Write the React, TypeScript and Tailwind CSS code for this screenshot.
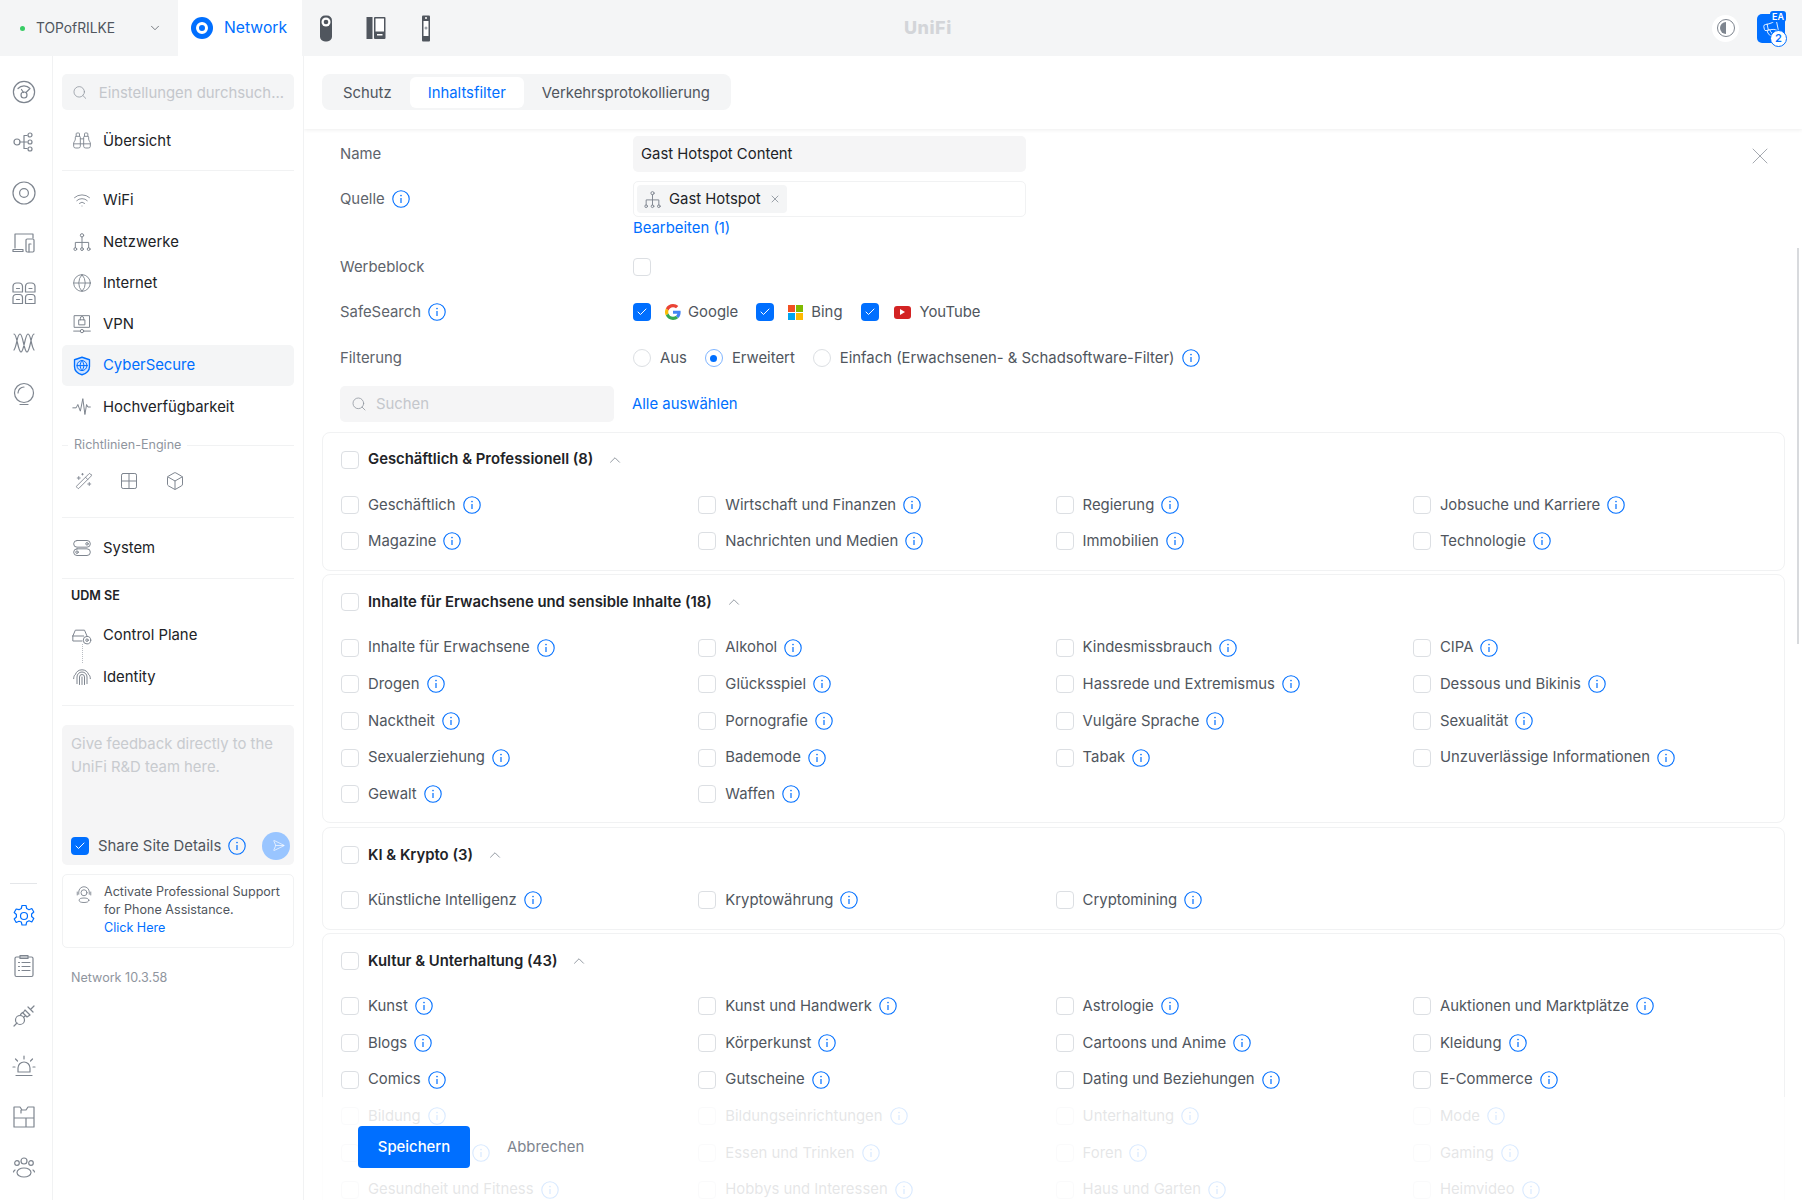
import React from 'react';
import { ChevronDown, ChevronUp, Search, X, Check, Binoculars, Wifi, Globe, Send, Wand2, Box, Megaphone } from 'lucide-react';

const blue = 'text-[#006fff]';

const Info: React.FC = () => (
  <svg width="18" height="18" viewBox="0 0 18 18" fill="none" className={`block shrink-0 ${blue}`} stroke="currentColor">
    <circle cx="9" cy="9" r="8.2" strokeWidth="1.1" />
    <path d="M9 8v5" strokeWidth="1.2" />
    <circle cx="9" cy="5.6" r=".8" fill="currentColor" stroke="none" />
  </svg>
);

const CheckBox: React.FC<{ on?: boolean }> = ({ on }) =>
  on ? (
    <span className="flex h-[18px] w-[18px] shrink-0 items-center justify-center rounded-[4px] bg-[#006fff] text-white">
      <Check size={12} strokeWidth={2} />
    </span>
  ) : (
    <span className="block h-[18px] w-[18px] shrink-0 rounded-[4px] border border-[#dcdfe3] bg-white" />
  );

const Radio: React.FC<{ on?: boolean }> = ({ on }) =>
  on ? (
    <span className="flex h-[18px] w-[18px] shrink-0 items-center justify-center rounded-full border border-[#7fb5ff]">
      <span className="h-[7px] w-[7px] rounded-full bg-[#006fff]" />
    </span>
  ) : (
    <span className="block h-[18px] w-[18px] shrink-0 rounded-full border border-[#dcdfe3]" />
  );

const Svg: React.FC<{ size?: number; children: React.ReactNode; className?: string }> = ({ size = 24, children, className = 'text-[#7e858f]' }) => (
  <svg width={size} height={size} viewBox="0 0 24 24" fill="none" stroke="currentColor" strokeWidth="1.2" strokeLinecap="round" strokeLinejoin="round" className={`shrink-0 ${className}`}>
    {children}
  </svg>
);

const OrgIcon: React.FC<{ size?: number }> = ({ size = 20 }) => (
  <Svg size={size}>
    <circle cx="12" cy="4" r="2" />
    <path d="M12 6v13M4 19v-6.500h16V19" />
    <circle cx="4" cy="20.500" r="1.700" />
    <circle cx="12" cy="20.500" r="1.700" />
    <circle cx="20" cy="20.500" r="1.700" />
  </Svg>
);

const railTop: React.ReactNode[] = [
  <Svg key="a"><circle cx="12" cy="12" r="10.6" /><path d="M6 8.500a8 8 0 0 1 12 0l-4 4" /><circle cx="12" cy="15" r="3" /><path d="M9.500 9.500l2 3" /></Svg>,
  <Svg key="b"><circle cx="5" cy="12" r="3" /><path d="M8 12h4M12 5.500v13M12 5.500h3M12 12h3M12 18.500h3" /><circle cx="18" cy="5" r="2" /><circle cx="18" cy="12" r="2" /><circle cx="18" cy="19" r="2" /></Svg>,
  <Svg key="c"><circle cx="12" cy="12" r="11" /><circle cx="12" cy="12" r="4.400" /></Svg>,
  <Svg key="d"><path d="M3 17V3h18v4" /><path d="M1 20.500h10v-2H1z" /><rect x="14" y="8" width="8" height="13" rx="1.200" /><path d="M17 21v-8h2" /></Svg>,
  <Svg key="e"><path d="M1 11V5a3.500 3.500 0 0 1 3.500-3h2.500a3.500 3.500 0 0 1 3.500 3v6zM13.500 11V5A3.500 3.500 0 0 1 17 2h2.500A3.500 3.500 0 0 1 23 5v6zM1 22.500v-6a3 3 0 0 1 3-3h3.500a3 3 0 0 1 3 3v6zM13.500 22.500v-6a3 3 0 0 1 3-3H20a3 3 0 0 1 3 3v6zM4.500 7.500h3M17 7.500h3M4.500 18.500h3M17 18.500h3" /></Svg>,
  <Svg key="f"><path d="M2 3c3 0 4 18 7 18S13 3 16 3s3 12 6 16M22 3c-3 0-4 18-7 18S11 3 8 3 5 15 2 19" /></Svg>,
  <Svg key="g"><circle cx="12" cy="11" r="9.500" /><path d="M6 11a6 6 0 0 1 6-6M8 22.500h8" /></Svg>,
];

const railBottom: React.ReactNode[] = [
  <Svg key="a" className="text-[#006fff]"><circle cx="12" cy="12" r="3.500" /><path d="M10 1.500h4l.7 3 2.300 1.200 2.800-1.200 2 3.500-2.200 2v2.500l2.200 2-2 3.500-2.800-1.200-2.300 1.200-.7 3h-4l-.7-3L7 17.300l-2.800 1.200-2-3.500 2.200-2v-2.500l-2.200-2 2-3.500L7 5.700l2.300-1.200z" /></Svg>,
  <Svg key="b"><rect x="3" y="3" width="18" height="19.500" rx="1.500" /><path d="M8 1.500h8V4.500H8zM6.500 8.500h1M10 8.500h8M6.500 12.500h1M10 12.500h8M6.500 16.500h1M10 16.500h8" /></Svg>,
  <Svg key="c"><path d="M2 22l3-3M22 2l-3 3M16 3l5 5M13 6l5 5-3 2-4-4zM10.500 8.500l-2 2M13.500 11.500l-2 2" /><circle cx="8" cy="16" r="4.500" /></Svg>,
  <Svg key="d"><path d="M6 18v-4a6 6 0 0 1 12 0v4zM4 21.500h16M12 2v3M3.500 5l2 2M20.500 5l-2 2M1 13h2M21 13h2" /></Svg>,
  <Svg key="e"><path d="M2 2h6l2 3h4l2-3h6v20H2zM2 13h12M14 13h8M14 13v9M9 5v3" /></Svg>,
  <Svg key="f"><circle cx="12" cy="6" r="3" /><ellipse cx="12" cy="17.500" rx="7" ry="4.500" /><circle cx="5" cy="8" r="2.300" /><circle cx="19" cy="8" r="2.300" /><path d="M3 15a3 3 0 0 0-1.500 2M21 15a3 3 0 0 1 1.500 2" /></Svg>,
];

const NavItem: React.FC<{ icon: React.ReactNode; label: string; active?: boolean }> = ({ icon, label, active }) => (
  <div className={`flex h-[41.3px] items-center gap-[11px] rounded-[5px] px-[10px] text-[14.86px] ${active ? 'bg-[#f4f5f6] text-[#006fff]' : 'text-[#212327]'}`}>
    <span className="flex w-[20px] justify-center">{icon}</span>
    {label}
  </div>
);

const Divider: React.FC<{ className?: string }> = ({ className = '' }) => <div className={`h-px bg-[#f1f2f3] ${className}`} />;

const Sidebar: React.FC = () => (
  <aside className="flex h-full w-[251px] shrink-0 flex-col border-r border-[#f1f2f3] px-[9px] pt-[18px]">
    <div className="flex h-9 shrink-0 items-center gap-[11px] rounded-[5px] bg-[#f4f5f6] px-[10px] text-[14.86px] text-[#c4c7cc]">
      <Search size={17} strokeWidth={1.2} className="text-[#8f959e]" />
      <span className="whitespace-nowrap pt-[2px]">Einstellungen durchsuch...</span>
    </div>
    <div className="mt-[10px]">
      <NavItem label="Übersicht" icon={<Binoculars size={21} strokeWidth={1.1} className="text-[#7e858f]" />} />
    </div>
    <Divider className="mt-[8.5px] mb-[9px]" />
    <NavItem label="WiFi" icon={<Wifi size={18} strokeWidth={1.2} className="text-[#7e858f]" />} />
    <NavItem label="Netzwerke" icon={<OrgIcon />} />
    <NavItem label="Internet" icon={<Globe size={20} strokeWidth={1.1} className="text-[#7e858f]" />} />
    <NavItem label="VPN" icon={<Svg size={20}><rect x="3" y="2" width="18" height="14" /><rect x="8.500" y="7" width="7" height="6" /><path d="M10 7V5a2 2 0 0 1 4 0v2M2 20.500h8M14 20.500h8" /><circle cx="12" cy="20.500" r="2" /></Svg>} />
    <NavItem active label="CyberSecure" icon={<Svg size={20} className="text-[#006fff]"><path d="M12 1.500l9 3v8c0 5-4 8.500-9 10-5-1.500-9-5-9-10v-8z" fill="#cfe3ff" strokeWidth="1.600" /><circle cx="12" cy="11.500" r="6" /><path d="M6 11.500h12M12 5.500c-3 3.500-3 8.500 0 12M12 5.500c3 3.500 3 8.500 0 12" /></Svg>} />
    <NavItem label="Hochverfügbarkeit" icon={<Svg size={20}><path d="M1 13h4l2-4 3 8 3-15 2.500 19 2-12 1.500 3h3" /></Svg>} />
    <div className="mt-[8px] flex h-5 items-center gap-[6px]">
      <span className="h-px w-[6px] bg-[#f1f2f3]" />
      <span className="text-[12.57px] text-[#8f959e]">Richtlinien-Engine</span>
      <span className="h-px flex-1 bg-[#f1f2f3]" />
    </div>
    <div className="mt-[17px] flex h-[16px] items-center gap-[26px] pl-[13px]">
      <Wand2 size={18} strokeWidth={1.2} className="text-[#7e858f]" />
      <Svg size={20}><rect x="3" y="3" width="18" height="18" rx="2" /><path d="M12 3v18M3 12h18" /></Svg>
      <Box size={20} strokeWidth={1.2} className="text-[#7e858f]" />
    </div>
    <Divider className="mt-[28px] mb-[10px]" />
    <NavItem label="System" icon={<Svg size={20}><rect x="2" y="3" width="20" height="8" rx="4" /><rect x="2" y="13" width="20" height="8" rx="4" /><circle cx="18" cy="7" r="1.500" /><circle cx="6" cy="17" r="1.500" /></Svg>} />
    <Divider className="mt-[9px]" />
    <div className="mt-[9px] flex h-[18px] items-center pl-[9px] text-[12.57px] font-semibold text-[#212327]">UDM SE</div>
    <div className="relative mt-[9px]">
      <NavItem label="Control Plane" icon={<Svg size={20}><path d="M1 12l3-7h11l3 7M1 12v6h11M1 12h13" /><circle cx="18" cy="17" r="4.500" /><circle cx="18" cy="17" r="1.500" /></Svg>} />
      <span className="absolute left-[19.5px] top-[29px] h-[19px] border-l border-dotted border-[#b9bdc3]" />
      <NavItem label="Identity" icon={<Svg size={20}><path d="M4 9a8.500 8.500 0 0 1 16 0M2 14c0-2 .5-3 1-4M22 14c0-2-.5-3-1-4M6 20v-8a6 6 0 0 1 12 0v8M9 21v-9a3 3 0 0 1 6 0v9M12 12v9" /></Svg>} />
    </div>
    <Divider className="mt-[8px]" />
    <div className="mt-[18.500px] flex h-[140px] shrink-0 flex-col rounded-[5px] bg-[#f5f5f6] pb-[5px] pl-[9px] pr-[4px] pt-[8px]">
      <p className="text-[14.86px] leading-[23px] text-[#c8cbcf]">Give feedback directly to the<br />UniFi R&amp;D team here.</p>
      <div className="mt-auto flex items-center">
        <CheckBox on />
        <span className="ml-[9px] text-[14.86px] text-[#50565e]">Share Site Details</span>
        <span className="ml-[7px]"><Info /></span>
        <span className="ml-auto flex h-7 w-7 items-center justify-center rounded-full bg-[#99c5ff] text-white"><Send size={13} strokeWidth={1.2} className="rotate-45" /></span>
      </div>
    </div>
    <div className="mt-[9px] flex h-[74px] shrink-0 gap-[11px] rounded-[5px] border border-[#f1f2f3] py-[8px] pl-[12px] text-[12.57px] leading-[18px] text-[#50565e]">
      <Svg size={18} className="mt-[3px] text-[#7e858f]"><circle cx="12" cy="9" r="4" /><path d="M5 11V8a7 7 0 0 1 14 0v3M3 8v4M21 8v4" /><ellipse cx="12" cy="19" rx="6.500" ry="3" /></Svg>
      <div>
        Activate Professional Support
        <br />
        for Phone Assistance.
        <br />
        <span className={blue}>Click Here</span>
      </div>
    </div>
    <div className="mt-[21px] pl-[9px] text-[12.57px] text-[#8f959e]">Network 10.3.58</div>
  </aside>
);

type Cat = { title: string; rows: string[][] };

const cats: Cat[] = [
  {
    title: 'Geschäftlich & Professionell (8)',
    rows: [
      ['Geschäftlich', 'Wirtschaft und Finanzen', 'Regierung', 'Jobsuche und Karriere'],
      ['Magazine', 'Nachrichten und Medien', 'Immobilien', 'Technologie'],
    ],
  },
  {
    title: 'Inhalte für Erwachsene und sensible Inhalte (18)',
    rows: [
      ['Inhalte für Erwachsene', 'Alkohol', 'Kindesmissbrauch', 'CIPA'],
      ['Drogen', 'Glücksspiel', 'Hassrede und Extremismus', 'Dessous und Bikinis'],
      ['Nacktheit', 'Pornografie', 'Vulgäre Sprache', 'Sexualität'],
      ['Sexualerziehung', 'Bademode', 'Tabak', 'Unzuverlässige Informationen'],
      ['Gewalt', 'Waffen'],
    ],
  },
  {
    title: 'KI & Krypto (3)',
    rows: [['Künstliche Intelligenz', 'Kryptowährung', 'Cryptomining']],
  },
  {
    title: 'Kultur & Unterhaltung (43)',
    rows: [
      ['Kunst', 'Kunst und Handwerk', 'Astrologie', 'Auktionen und Marktplätze'],
      ['Blogs', 'Körperkunst', 'Cartoons und Anime', 'Kleidung'],
      ['Comics', 'Gutscheine', 'Dating und Beziehungen', 'E-Commerce'],
      ['Bildung', 'Bildungseinrichtungen', 'Unterhaltung', 'Mode'],
      ['Gemeinschaft', 'Essen und Trinken', 'Foren', 'Gaming'],
      ['Gesundheit und Fitness', 'Hobbys und Interessen', 'Haus und Garten', 'Heimvideo'],
    ],
  },
];

const CategoryCard: React.FC<{ cat: Cat }> = ({ cat }) => (
  <section className="shrink-0 rounded-[8px] border border-[#f1f2f3] pb-[10px] pl-[18px] pt-[9px]">
    <div className="flex h-9 items-center">
      <CheckBox />
      <span className="ml-[9px] text-[14.86px] font-semibold text-[#212327]">{cat.title}</span>
      <ChevronUp size={18} strokeWidth={1.1} className="ml-[13px] text-[#7e858f]" />
    </div>
    <div className="mt-[9px] grid grid-cols-[repeat(4,357.3px)]">
      {cat.rows.flat().map((item) => (
        <div key={item} className="flex h-[36.67px] items-center">
          <CheckBox />
          <span className="ml-[9px] text-[14.86px] text-[#50565e]">{item}</span>
          <span className="ml-[7px]"><Info /></span>
        </div>
      ))}
    </div>
  </section>
);

const GoogleG = () => (
  <svg width="16" height="16" viewBox="0 0 48 48">
    <path fill="#EA4335" d="M24 9.500c3.500 0 6.600 1.200 9.100 3.600l6.800-6.800C35.800 2.500 30.300 0 24 0 14.600 0 6.500 5.400 2.600 13.200l7.900 6.200C12.400 13.600 17.700 9.500 24 9.500z" />
    <path fill="#4285F4" d="M46.900 24.500c0-1.600-.1-3.100-.4-4.500H24v9h12.900c-.6 3-2.200 5.500-4.700 7.200l7.700 6c4.500-4.200 7-10.300 7-17.700z" />
    <path fill="#FBBC05" d="M10.500 28.600A14.500 14.500 0 0 1 10.500 19.400l-7.900-6.200a24 24 0 0 0 0 21.600z" />
    <path fill="#34A853" d="M24 48c6.500 0 11.900-2.100 15.900-5.800l-7.700-6c-2.200 1.500-4.900 2.300-8.200 2.300-6.300 0-11.600-4.100-13.500-9.900l-7.900 6.200C6.500 42.600 14.600 48 24 48z" />
  </svg>
);

const BingMark = () => (
  <span className="grid h-[15px] w-[15px] grid-cols-2 gap-px">
    <span className="bg-[#f25022]" />
    <span className="bg-[#7fba00]" />
    <span className="bg-[#00a4ef]" />
    <span className="bg-[#ffb900]" />
  </span>
);

const YouTubeMark = () => (
  <span className="flex h-[13px] w-[17px] items-center justify-center rounded-[3px] bg-[#d32323]">
    <span className="h-0 w-0 border-y-[3px] border-l-[5px] border-y-transparent border-l-white" />
  </span>
);

const Field: React.FC<{ label: string; info?: boolean; className?: string; children: React.ReactNode }> = ({ label, info, className = '', children }) => (
  <div className={`flex h-9 items-center text-[14.86px] ${className}`}>
    <div className="flex w-[293px] shrink-0 items-center gap-[7px] text-[#5e646c]">
      {label}
      {info && <Info />}
    </div>
    {children}
  </div>
);

const Brand: React.FC<{ logo: React.ReactNode; label: string; className?: string; logoClass?: string }> = ({ logo, label, className = '', logoClass = 'ml-[13px] mr-[7px]' }) => (
  <div className={`flex items-center text-[#50565e] ${className}`}>
    <CheckBox on />
    <span className={`flex w-[17px] justify-center ${logoClass}`}>{logo}</span>
    {label}
  </div>
);

const Main: React.FC = () => (
  <main className="relative flex h-full min-w-0 flex-1 flex-col overflow-hidden">
    <div className="relative z-10 flex h-[73px] shrink-0 items-start bg-white px-[18px] pt-[18px] shadow-[0_1px_4px_rgba(0,0,0,0.07)]">
      <div className="flex h-9 items-center rounded-[8px] bg-[#f4f5f6] p-[3px] text-[14.86px] text-[#50565e]">
        <span className="px-[18px] pt-[2px]">Schutz</span>
        <span className={`flex h-[31px] items-center rounded-[6px] bg-white px-[18px] pt-[2px] ${blue}`}>Inhaltsfilter</span>
        <span className="px-[18px] pt-[2px]">Verkehrsprotokollierung</span>
      </div>
    </div>

    <div className="relative px-[18px] pt-[7px]">
      <X size={28} strokeWidth={0.8} className="absolute right-[28px] top-[13px] text-[#9ea3aa]" />
      <div className="pl-[18px]">
        <Field label="Name">
          <div className="flex h-9 w-[393px] items-center rounded-[5px] bg-[#f5f5f6] px-[8px] text-[#212327]">Gast Hotspot Content</div>
        </Field>
        <Field label="Quelle" info className="mt-[9px]">
          <div className="flex h-9 w-[393px] items-center rounded-[5px] border border-[#f1f2f3] px-[3px]">
            <div className="flex h-7 items-center rounded-[4px] bg-[#f4f5f6] px-[6px] text-[#212327]">
              <OrgIcon size={19} />
              <span className="ml-[7px]">Gast Hotspot</span>
              <X size={12} strokeWidth={1.5} className="ml-[8px] text-[#7e858f]" />
            </div>
          </div>
        </Field>
        <div className={`ml-[293px] flex h-[21px] items-center pt-[2px] text-[14.86px] ${blue}`}>Bearbeiten (1)</div>
        <Field label="Werbeblock" className="mt-[11px]">
          <CheckBox />
        </Field>
        <Field label="SafeSearch" info className="mt-[9px]">
          <Brand logo={<GoogleG />} label="Google" />
          <Brand logo={<BingMark />} label="Bing" className="ml-[18px]" />
          <Brand logo={<YouTubeMark />} label="YouTube" className="ml-[18px]" logoClass="ml-[15px] mr-[9px]" />
        </Field>
        <Field label="Filterung" className="mt-[10px]">
          <div className="flex items-center text-[#50565e]">
            <Radio />
            <span className="ml-[9px]">Aus</span>
            <span className="ml-[18px]"><Radio on /></span>
            <span className="ml-[9px]">Erweitert</span>
            <span className="ml-[18px]"><Radio /></span>
            <span className="ml-[9px]">Einfach (Erwachsenen- &amp; Schadsoftware-Filter)</span>
            <span className="ml-[7px]"><Info /></span>
          </div>
        </Field>
        <div className="mt-[10px] flex h-9 items-center text-[14.86px]">
          <div className="flex h-9 w-[274px] items-center gap-[9px] rounded-[5px] bg-[#f5f5f6] px-[11px] text-[#c4c7cc]">
            <Search size={16} strokeWidth={1.2} className="text-[#8f959e]" />
            Suchen
          </div>
          <span className={`ml-[18px] ${blue}`}>Alle auswählen</span>
        </div>
      </div>
      <div className="mt-[9.5px] flex w-[1463px] flex-col gap-[3.4px]">
        {cats.map((c) => (
          <CategoryCard key={c.title} cat={c} />
        ))}
      </div>
    </div>

    {/* save bar fades the list behind it */}
    <div className="absolute bottom-0 left-0 right-0 z-20 flex h-[103px] items-start bg-white/85 pl-[54px] pt-[29px]">
      <span className="flex h-[42px] w-[112px] items-center justify-center rounded-[4px] bg-[#006fff] text-[14.86px] font-medium text-white">Speichern</span>
      <span className="ml-[37px] flex h-[42px] items-center text-[14.86px] text-[#7e858f]">Abbrechen</span>
    </div>
    <span className="absolute right-[3px] top-[192px] z-30 h-[396px] w-[2px] bg-[#d8dadd]" />
  </main>
);

const TopBar: React.FC = () => (
  <header className="flex h-14 shrink-0 items-center bg-[#f4f5f6]">
    <div className="flex w-[178px] items-center pl-[20px] text-[13.8px] text-[#50565e]">
      <span className="h-[5px] w-[5px] rounded-full bg-[#38cc65]" />
      <span className="ml-[11px]">TOPofRILKE</span>
      <ChevronDown size={14} strokeWidth={1.3} className="ml-[33px] text-[#50565e]" />
    </div>
    <div className="flex h-full w-[124px] items-center gap-[11px] bg-white pl-[13px] text-[15.7px] text-[#006fff]">
      <span className="flex h-[22px] w-[22px] items-center justify-center rounded-full bg-[#006fff]">
        <span className="h-[12px] w-[12px] rounded-full border-[3px] border-white" />
      </span>
      Network
    </div>
    <div className="flex items-center gap-[33px] pl-[17px]">
      <svg width="14" height="27" viewBox="0 0 14 27" className="text-[#50565e]">
        <rect x="1" y="0.500" width="12" height="26" rx="5" fill="currentColor" />
        <circle cx="7" cy="7" r="4.500" fill="#fff" />
        <circle cx="7" cy="7" r="2.300" fill="currentColor" />
      </svg>
      <svg width="20" height="24" viewBox="0 0 20 24" className="text-[#50565e]">
        <rect x="0.500" y="1" width="6" height="22" fill="currentColor" />
        <rect x="8" y="1" width="11.500" height="22" rx="1" fill="currentColor" />
        <rect x="9.500" y="2.500" width="8.500" height="13" fill="#fff" />
        <rect x="11" y="18" width="5.500" height="1.500" fill="#fff" />
      </svg>
      <svg width="10" height="27" viewBox="0 0 10 27" className="ml-[2px] text-[#50565e]">
        <rect x="1" y="0.500" width="8" height="26" rx="1" fill="currentColor" />
        <rect x="2.500" y="6" width="5" height="15" fill="#fff" />
        <circle cx="5" cy="3" r="1" fill="#fff" />
        <circle cx="5" cy="13" r="1.500" fill="#9ea3aa" />
      </svg>
    </div>
    <div className="absolute left-[904px] top-[15px] text-[18px] font-extrabold leading-[26px] tracking-[0.5px] text-[#d3d5d9]">UniFi</div>
    <div className="ml-auto flex items-center">
      <span className="flex h-[27px] w-[27px] items-center justify-center rounded-full bg-white">
        <span className="flex h-[18px] w-[18px] overflow-hidden rounded-full border border-[#7e858f] p-[2px]">
          <span className="h-full w-1/2 rounded-l-full bg-[#7e858f]" />
        </span>
      </span>
      <div className="relative ml-[18px] mr-[17px] flex h-[29px] w-[28px] items-center justify-center rounded-[5px] bg-[#006fff]">
        <Megaphone size={18} strokeWidth={1.1} className="-rotate-12 text-white" />
        <span className="absolute -right-[1px] -top-[3px] rounded-[3px] bg-[#006fff] px-[2px] text-[9px] font-semibold leading-[11px] text-white">EA</span>
        <span className="absolute -bottom-[4px] -right-[2px] flex h-[17px] w-[17px] items-center justify-center rounded-full border border-[#006fff] bg-white text-[11px] font-semibold text-[#006fff]">2</span>
      </div>
    </div>
  </header>
);

const App: React.FC = () => (
  <div className="relative flex h-[1200px] w-full flex-col overflow-hidden bg-white [font-family:Inter,sans-serif]">
    <TopBar />
    <div className="flex min-h-0 flex-1">
      <nav className="flex h-full w-[53px] shrink-0 flex-col items-center border-r border-[#f1f2f3] pb-[21px] pr-[5px] pt-[24px]">
        <div className="flex flex-col gap-[26.300px]">{railTop}</div>
        <div className="mt-auto flex flex-col items-center">
          <span className="mb-[20px] h-px w-[27px] bg-[#e4e6e9]" />
          <div className="flex flex-col gap-[26.300px]">{railBottom}</div>
        </div>
      </nav>
      <Sidebar />
      <Main />
    </div>
  </div>
);

export default App;
